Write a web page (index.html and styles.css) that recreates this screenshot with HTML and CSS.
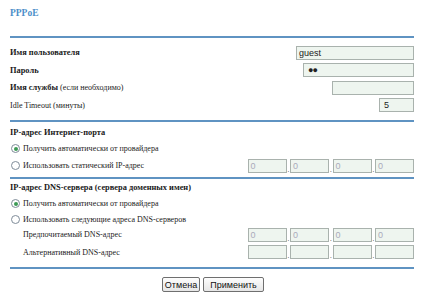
FILE: index.html
```html
<!DOCTYPE html>
<html>
<head>
<meta charset="utf-8">
<link rel="stylesheet" href="styles.css">
</head>
<body>
<div class="page">
  <h1 class="title">PPPoE</h1>
  <div class="rule"></div>
  <div class="block-account">
    <div class="row acc"><span class="label b">Имя пользователя</span><span class="input w-user">guest</span></div>
    <div class="row acc"><span class="label b">Пароль</span><span class="input w-pass dots">●●</span></div>
    <div class="row acc"><span class="label"><b>Имя службы</b> (если необходимо)</span><span class="input w-svc"></span></div>
    <div class="row acc"><span class="label">Idle Timeout (минуты)</span><span class="input w-idle">5</span></div>
  </div>
  <div class="rule"></div>
  <div class="block-wan">
    <div class="head b">IP-адрес Интернет-порта</div>
    <div class="row r17"><span class="radio on"></span><span class="label">Получить автоматически от провайдера</span></div>
    <div class="row r17"><span class="radio"></span><span class="label">Использовать статический IP-адрес</span>
      <span class="ip"><span class="input oct">0</span><i>.</i><span class="input oct">0</span><i>.</i><span class="input oct">0</span><i>.</i><span class="input oct">0</span></span></div>
  </div>
  <div class="rule"></div>
  <div class="block-dns">
    <div class="head b">IP-адрес DNS-сервера (сервера доменных имен)</div>
    <div class="row r17"><span class="radio on"></span><span class="label">Получить автоматически от провайдера</span></div>
    <div class="row r14"><span class="radio"></span><span class="label">Использовать следующие адреса DNS-серверов</span></div>
    <div class="row r17"><span class="label sub">Предпочитаемый DNS-адрес</span>
      <span class="ip"><span class="input oct">0</span><i>.</i><span class="input oct">0</span><i>.</i><span class="input oct">0</span><i>.</i><span class="input oct">0</span></span></div>
    <div class="row r18"><span class="label sub">Альтернативный DNS-адрес</span>
      <span class="ip"><span class="input oct"></span><i>.</i><span class="input oct"></span><i>.</i><span class="input oct"></span><i>.</i><span class="input oct"></span></span></div>
  </div>
  <div class="rule"></div>
  <div class="buttons">
    <button class="btn w-cancel">Отмена</button>
    <button class="btn w-apply">Применить</button>
  </div>
</div>
</body>
</html>
```
FILE: styles.css
```css
* { box-sizing: border-box; }
html, body { margin: 0; padding: 0; background: #fff; }
body { font-family: "Liberation Serif", "Times New Roman", serif; font-size: 8px; color: #1a1a1a; }
.page { width: 424px; height: 302px; padding: 0 10px; }
.title { margin: 0; padding-top: 7px; height: 36px; font-size: 9.5px; font-weight: bold; color: #4d8fc9; line-height: 12px; }
.rule { height: 2px; background: #5f93c2; }
.b, b { font-weight: bold; font-size: 8.4px; }
.block-account { padding-top: 6px; height: 82px; }
.row { display: flex; align-items: center; }
.acc { height: 17.5px; }
.r14 { height: 14px; }
.r17 { height: 17px; }
.r18 { height: 18px; }
.block-wan { padding-top: 4px; height: 55px; }
.block-dns { padding-top: 2px; height: 88px; }
.head { height: 14px; line-height: 14px; }
.label { flex: 1; white-space: nowrap; }
.label.sub { padding-left: 13px; }
.radio { width: 9px; height: 9px; border: 1px solid #7f8c99; border-radius: 50%; margin-left: 1px; margin-right: 3px; background: #fff; display: flex; align-items: center; justify-content: center; }
.radio.on::after { content: ""; width: 4px; height: 4px; border-radius: 50%; background: #3d9a55; }
.input { height: 14px; border: 1px solid #a9b2ad; background: #eef5ef; font-family: "Liberation Sans", Arial, sans-serif; font-size: 9px; line-height: 12px; padding-left: 2px; color: #222; }
.w-user { width: 118px; }
.w-pass { width: 111px; padding-left: 4px; font-size: 9px; letter-spacing: -1px; }
.w-svc { width: 82px; }
.w-idle { width: 35px; padding-left: 4px; }
.ip { display: flex; align-items: flex-end; }
.ip i { font-style: normal; width: 3.5px; font-family: "Liberation Sans", Arial, sans-serif; font-size: 8px; line-height: 6px; color: #555; text-align: center; }
.oct { width: 39px; color: #aab; }
.buttons { display: flex; justify-content: center; gap: 3px; padding-top: 8px; padding-left: 2px; }
.btn { height: 15px; border: 1px solid #6f6f6f; border-radius: 2px; background: linear-gradient(#fdfdfd, #e6e6e6); font-family: "Liberation Sans", Arial, sans-serif; font-size: 9px; padding: 0; color: #111; }
.w-cancel { width: 38px; }
.w-apply { width: 61px; }
```
